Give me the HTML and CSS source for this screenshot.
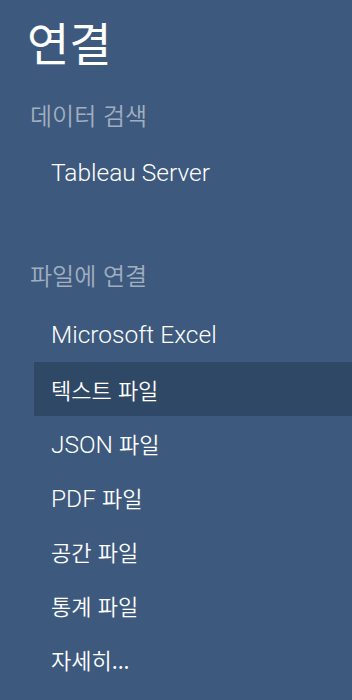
FILE: index.html
```html
<!DOCTYPE html>
<html lang="ko">
<head>
<meta charset="utf-8">
<link rel="stylesheet" href="styles.css">
</head>
<body>
<nav class="panel">
  <h1 class="title">연결</h1>
  <section class="group group-search">
    <h2 class="group-head">데이터 검색</h2>
    <ul class="list">
      <li class="item">Tableau Server</li>
    </ul>
  </section>
  <section class="group group-file">
    <h2 class="group-head">파일에 연결</h2>
    <ul class="list">
      <li class="item">Microsoft Excel</li>
      <li class="item item-active"><span class="ko">텍스트 파일</span></li>
      <li class="item">JSON <span class="ko">파일</span></li>
      <li class="item">PDF <span class="ko">파일</span></li>
      <li class="item"><span class="ko">공간 파일</span></li>
      <li class="item"><span class="ko">통계 파일</span></li>
      <li class="item"><span class="ko">자세히...</span></li>
    </ul>
  </section>
</nav>
</body>
</html>
```

FILE: styles.css
```css
html, body {
  margin: 0;
  padding: 0;
  background: #3d5a7e;
}
body {
  width: 352px;
  height: 700px;
  overflow: hidden;
  font-family: Roboto, "Noto Sans CJK KR", sans-serif;
  color: #ffffff;
}
.panel {
  display: flex;
  flex-direction: column;
  padding-top: 11px;
}
.title {
  margin: 0;
  padding-left: 27px;
  height: 60px;
  line-height: 60px;
  font-size: 46px;
  font-weight: 400;
  font-family: "Noto Sans CJK KR", sans-serif;
}
.group-search {
  margin-top: 24px;
}
.group-file {
  margin-top: 55px;
}
.group-head {
  margin: 0;
  padding-left: 30px;
  height: 40px;
  line-height: 40px;
  font-size: 24px;
  font-weight: 350;
  color: #a1aec0;
  font-family: "Noto Sans CJK KR", sans-serif;
}
.list {
  list-style: none;
  margin: 0;
  padding: 0;
}
.group-search .list {
  margin-top: 11px;
}
.group-file .list {
  margin-top: 13px;
}
.item {
  margin-left: 34px;
  padding-left: 17px;
  height: 54px;
  line-height: 54px;
  font-size: 24.5px;
  font-weight: 300;
  white-space: nowrap;
}
.ko {
  font-size: 22px;
  font-weight: 350;
  font-family: "Noto Sans CJK KR", sans-serif;
}
.item-active {
  background: #2f4866;
}
```
